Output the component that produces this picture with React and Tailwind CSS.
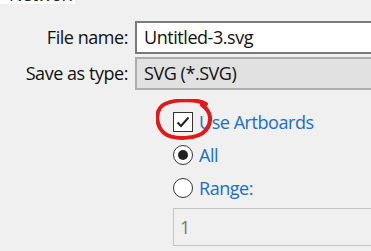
export default function App() {
  const font = { fontFamily: '"Segoe UI", "Open Sans", "Noto Sans", sans-serif' };
  return (
    <div className="w-[371px] h-[251px] bg-[#f0f0f0] overflow-hidden relative tracking-[-0.45px]" style={font}>
      {/* top cut strip */}
      <div className="h-[4px] w-[75px] bg-white overflow-hidden flex">
        <div className="w-[4px] h-[4px] bg-[#3a6fb0]"></div>
        <div className="ml-[9px] -mt-[17px] text-[18px] leading-[22px] text-[#222]">Network</div>
      </div>
      <div className="flex flex-col">
        {/* File name row */}
        <div className="flex items-center mt-[17px] h-[33px]">
          <div className="w-[128px] text-right text-[18px] text-[#111]">File name:</div>
          <div className="ml-[7px] flex-1 h-[33px] bg-white border-t-2 border-b-2 border-l-2 border-[#7a7a7a] flex items-center pl-[7px] text-[18px] text-[#111]">
            Untitled-3.svg
          </div>
        </div>
        {/* Save as type row */}
        <div className="flex items-center mt-[3px] h-[33px]">
          <div className="w-[128px] text-right text-[18px] text-[#111]">Save as type:</div>
          <div className="ml-[7px] flex-1 h-[33px] bg-[#e1e1e1] border-t-2 border-b-2 border-l-2 border-[#adadad] flex items-center pl-[7px] text-[18px] text-[#111]">
            SVG (*.SVG)
          </div>
        </div>
        {/* options */}
        <div className="ml-[173px] flex flex-col mt-[22px]">
          <div className="flex items-center h-[20px] relative">
            <div className="w-[20px] h-[20px] border-[1.5px] border-[#333] bg-white flex items-center justify-center">
              <svg width="14" height="12" viewBox="0 0 14 12">
                <path d="M1.5 6.5 L5 10 L12.5 1.5" fill="none" stroke="#222" strokeWidth="2" />
              </svg>
            </div>
            <span className="ml-[6px] text-[18px] text-[#1a6ec8]">Use Artboards</span>
            <svg className="absolute left-[-17px] top-[-13px]" width="58" height="42" viewBox="0 0 58 42">
              <path d="M50 5 C 40 -1, 10 0, 4 9 C 0 15, 0 27, 8 34 C 16 41, 42 41, 50 31 C 56 23, 56 13, 46 6" fill="none" stroke="#e01a1a" strokeWidth="4" strokeLinecap="round" />
            </svg>
          </div>
          <div className="flex items-center h-[20px] mt-[13px]">
            <div className="w-[20px] h-[20px] rounded-full border-[1.5px] border-[#333] bg-white flex items-center justify-center">
              <div className="w-[10px] h-[10px] rounded-full bg-[#222]"></div>
            </div>
            <span className="ml-[6px] text-[18px] text-[#1a6ec8]">All</span>
          </div>
          <div className="flex items-center h-[20px] mt-[13px]">
            <div className="w-[20px] h-[20px] rounded-full border-[1.5px] border-[#333] bg-white"></div>
            <span className="ml-[6px] text-[18px] text-[#1a6ec8]">Range:</span>
          </div>
          <div className="mt-[10px] h-[38px] border border-r-0 border-[#c4c4c4] bg-[#f0f0f0] flex items-center pl-[6px] text-[18px] text-[#777]">
            1
          </div>
        </div>
      </div>
    </div>
  );
}
